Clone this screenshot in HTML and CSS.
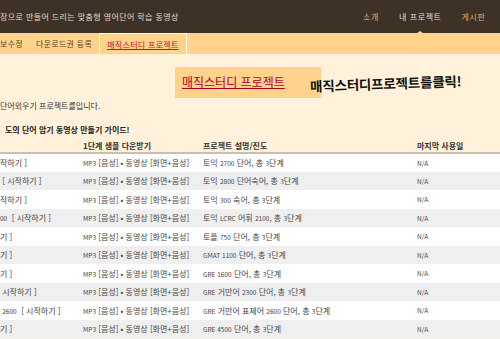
FILE: index.html
```html
<!DOCTYPE html>
<html lang="ko">
<head>
  <meta charset="UTF-8" />
  <meta name="viewport" content="width=device-width, initial-scale=1.0"/>
  <title>매직스터디 프로젝트</title>
  <link rel="stylesheet" href="styles.css">
</head>
<body>

  <!-- Top bar -->
  <header class="topbar">
    <div class="site-title">장으로 만들어 드리는 맞춤형 영어단어 학습 동영상</div>
    <nav class="gnb">
      <a href="#">소개</a>
      <a href="#" class="on">내 프로젝트</a>
      <a href="#">게시판</a>
    </nav>
  </header>

  <!-- Sub menu -->
  <div class="subbar">
    <a href="#">보수정</a>
    <a href="#">다운로드권 등록</a>
    <a href="#" class="sub-on">매직스터디 프로젝트</a>
  </div>

  <!-- Callout -->
  <div class="callout">
    <a href="#" class="callout-btn">매직스터디 프로젝트</a>
    <span class="hand">매직스터디프로젝트를클릭!</span>
  </div>

  <p class="intro">단어외우기 프로젝트를입니다.</p>
  <p class="guide">도의 단어 암기 동영상 만들기 가이드!</p>

  <!-- Project list -->
  <table class="projects">
    <colgroup>
      <col class="c1"><col class="c2"><col class="c3"><col class="c4">
    </colgroup>
    <thead>
      <tr>
        <th></th>
        <th>1단계 샘플 다운받기</th>
        <th>프로젝트 설명/진도</th>
        <th>마지막 사용일</th>
      </tr>
    </thead>
    <tbody>
      <tr>
        <td>작하기 ]</td>
        <td class="dl"><span class="mp">MP3</span> [음성] • 동영상 [화면+음성]</td>
        <td class="desc">토익 <span class="num">2700</span> 단어, 총 <span class="num">3</span>단계</td>
        <td class="na">N/A</td>
      </tr>
      <tr>
        <td>&nbsp;[ 시작하기 ]</td>
        <td class="dl"><span class="mp">MP3</span> [음성] • 동영상 [화면+음성]</td>
        <td class="desc">토익 <span class="num">2800</span> 단어숙어, 총 <span class="num">3</span>단계</td>
        <td class="na">N/A</td>
      </tr>
      <tr>
        <td>작하기 ]</td>
        <td class="dl"><span class="mp">MP3</span> [음성] • 동영상 [화면+음성]</td>
        <td class="desc">토익 <span class="num">300</span> 숙어, 총 <span class="num">3</span>단계</td>
        <td class="na">N/A</td>
      </tr>
      <tr>
        <td><span class="num">00</span>&nbsp; [ 시작하기 ]</td>
        <td class="dl"><span class="mp">MP3</span> [음성] • 동영상 [화면+음성]</td>
        <td class="desc">토익 <span class="num">LCRC</span> 어휘 <span class="num">2100</span>, 총 <span class="num">3</span>단계</td>
        <td class="na">N/A</td>
      </tr>
      <tr>
        <td>기 ]</td>
        <td class="dl"><span class="mp">MP3</span> [음성] • 동영상 [화면+음성]</td>
        <td class="desc">토플 <span class="num">750</span> 단어, 총 <span class="num">3</span>단계</td>
        <td class="na">N/A</td>
      </tr>
      <tr>
        <td>기 ]</td>
        <td class="dl"><span class="mp">MP3</span> [음성] • 동영상 [화면+음성]</td>
        <td class="desc"><span class="num">GMAT 1100</span> 단어, 총 <span class="num">3</span>단계</td>
        <td class="na">N/A</td>
      </tr>
      <tr>
        <td>기 ]</td>
        <td class="dl"><span class="mp">MP3</span> [음성] • 동영상 [화면+음성]</td>
        <td class="desc"><span class="num">GRE 1600</span> 단어, 총 <span class="num">3</span>단계</td>
        <td class="na">N/A</td>
      </tr>
      <tr>
        <td>&nbsp;시작하기 ]</td>
        <td class="dl"><span class="mp">MP3</span> [음성] • 동영상 [화면+음성]</td>
        <td class="desc"><span class="num">GRE</span> 거만어 <span class="num">2300</span> 단어, 총 <span class="num">3</span>단계</td>
        <td class="na">N/A</td>
      </tr>
      <tr>
        <td>&nbsp;<span class="num">2600</span>&nbsp; [ 시작하기 ]</td>
        <td class="dl"><span class="mp">MP3</span> [음성] • 동영상 [화면+음성]</td>
        <td class="desc"><span class="num">GRE</span> 거만어 표제어 <span class="num">2600</span> 단어, 총 <span class="num">3</span>단계</td>
        <td class="na">N/A</td>
      </tr>
      <tr>
        <td>기 ]</td>
        <td class="dl"><span class="mp">MP3</span> [음성] • 동영상 [화면+음성]</td>
        <td class="desc"><span class="num">GRE 4500</span> 단어, 총 <span class="num">3</span>단계</td>
        <td class="na">N/A</td>
      </tr>
    </tbody>
  </table>

</body>
</html>
```

FILE: styles.css
```css
* {
  box-sizing: border-box;
  margin: 0;
  padding: 0;
}

html, body {
  width: 500px;
  overflow: hidden;
}

body {
  font-family: "Noto Sans CJK KR", "Noto Sans", sans-serif;
  font-size: 8px;
  background: #fff1da;
  color: #333;
}

a {
  text-decoration: none;
  color: inherit;
}

/* Top bar */
.topbar {
  display: flex;
  align-items: center;
  height: 33px;
  background: #3e3226;
}

.site-title {
  flex: 0 0 363px;
  white-space: nowrap;
  color: #e6dccb;
  font-size: 8px;
  letter-spacing: 0.4px;
}

.gnb {
  display: flex;
  gap: 20px;
  white-space: nowrap;
}

.gnb a {
  position: relative;
  color: #d8b471;
  font-size: 8px;
  letter-spacing: 0.6px;
}

.gnb a.on {
  color: #e2ddd4;
}

.gnb a.on::after {
  content: "";
  position: absolute;
  left: 50%;
  bottom: -14px;
  margin-left: -7px;
  border-left: 7px solid transparent;
  border-right: 7px solid transparent;
  border-bottom: 5px solid #ffd38c;
}

/* Sub menu */
.subbar {
  display: flex;
  align-items: stretch;
  gap: 13px;
  height: 21px;
  background: #ffd38c;
  white-space: nowrap;
}

.subbar a {
  display: flex;
  align-items: center;
  color: #5a4322;
  letter-spacing: 0.3px;
}

.subbar a.sub-on {
  margin-left: -6px;
  padding: 0 7px;
  border: 1px solid #fff;
  border-bottom: none;
  color: #c4122f;
  text-decoration: underline;
}

/* Callout */
.callout {
  display: flex;
  align-items: center;
  margin: 13px 0 0 175px;
  height: 31px;
}

.callout-btn {
  display: flex;
  align-items: center;
  width: 146px;
  height: 31px;
  padding: 0 0 2px 7px;
  background: #ffd38c;
  color: #b0002a;
  font-size: 12px;
  text-decoration: underline;
}

.hand {
  margin-left: -11px;
  font-size: 13.5px;
  font-weight: 700;
  color: #111;
  letter-spacing: -0.2px;
  transform: rotate(-2deg);
  white-space: nowrap;
}

.intro {
  margin-top: 2px;
  line-height: 12px;
  color: #333;
}

.guide {
  margin: 12px 0 0 5px;
  line-height: 12px;
  font-weight: 700;
  color: #222;
}

/* Project list */
.projects {
  width: 500px;
  margin-top: 2px;
  border-collapse: collapse;
  table-layout: fixed;
}

.c1 { width: 83px; }
.c2 { width: 120px; }
.c3 { width: 214px; }
.c4 { width: 83px; }

.projects th {
  height: 15px;
  padding-bottom: 1px;
  vertical-align: bottom;
  text-align: left;
  font-weight: 700;
  color: #333;
  border-bottom: 2px solid #c8c0b4;
  white-space: nowrap;
}

.projects td {
  height: 18.5px;
  color: #444;
  white-space: nowrap;
  overflow: hidden;
}

.projects tbody tr {
  background: #fff;
}

.projects tbody tr:nth-child(even) {
  background: #efefef;
}

.mp,
.num {
  font-size: 6.5px;
}

.desc {
  color: #8e8e8e;
}

.na {
  font-size: 6.5px;
  color: #555;
}
```
